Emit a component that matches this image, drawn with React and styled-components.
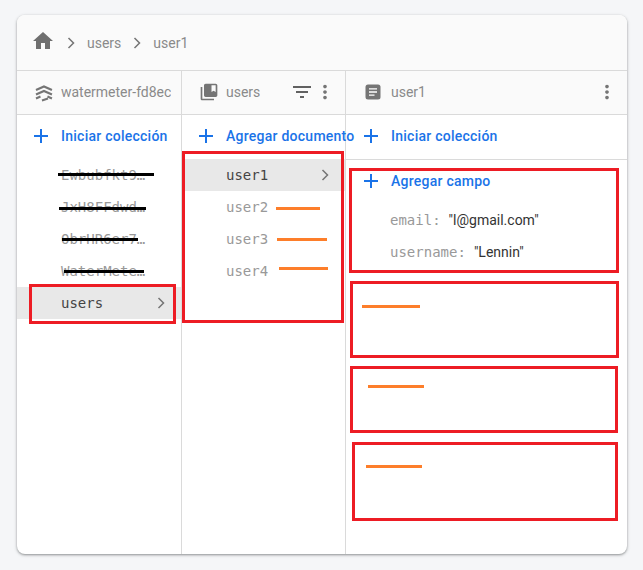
import styled, { createGlobalStyle } from 'styled-components';
import { MdHome, MdCollectionsBookmark, MdFilterList, MdMoreVert } from 'react-icons/md';

const collections = ['Ewbubfkt9…', 'JxH8FFdwd…', 'ObrHR6er7…', 'WaterMete…'];
const documents = ['user2', 'user3', 'user4'];
const fields = [
  { name: 'email', value: '"l@gmail.com"' },
  { name: 'username', value: '"Lennin"' },
];

const redBoxes = [
  { x: 29, y: 284, w: 147, h: 40 },
  { x: 182, y: 151, w: 162, h: 172 },
  { x: 349, y: 168, w: 270, h: 105 },
  { x: 350, y: 281, w: 269, h: 77 },
  { x: 350, y: 366, w: 268, h: 67 },
  { x: 352, y: 442, w: 266, h: 79 },
];

const blackLines = [
  { x: 58, y: 173, w: 96 },
  { x: 59, y: 207, w: 87 },
  { x: 62, y: 238, w: 76 },
  { x: 64, y: 270, w: 80 },
];

const orangeLines = [
  { x: 276, y: 207, w: 44 },
  { x: 277, y: 238, w: 50 },
  { x: 279, y: 267, w: 49 },
  { x: 362, y: 305, w: 58 },
  { x: 368, y: 385, w: 56 },
  { x: 366, y: 465, w: 56 },
];

const Chevron = () => (
  <svg width="12" height="12" viewBox="0 0 12 12" fill="none" stroke="#757575" strokeWidth="1.5">
    <path d="M3.5 1 L8.5 6 L3.5 11" />
  </svg>
);

const Plus = () => (
  <PlusSvg viewBox="0 0 16 16" stroke="#1a73e8" strokeWidth="2">
    <path d="M8 1 V15 M1 8 H15" />
  </PlusSvg>
);

const ProjectIcon = () => (
  <svg width="20" height="20" viewBox="0 0 20 20" fill="none" stroke="#757575" strokeWidth="2.2">
    <path d="M2 8 L10 4.5 L18 8" />
    <path d="M2 12.5 L10 9 L18 12.5" />
    <path d="M2 16.5 L6.5 14.5 M13.5 14.5 L18 16.5" />
    <path d="M8 18.5 L14 16.5" />
  </svg>
);

const DocIcon = () => (
  <svg width="16" height="16" viewBox="0 0 16 16">
    <rect x="0.5" y="0.5" width="15" height="15" rx="2.5" fill="#757575" />
    <path d="M4 4.8 H12 M4 8 H12 M4 11.2 H9.5" stroke="#fff" strokeWidth="1.3" />
  </svg>
);

const App = () => {
  return (
    <Page>
      <GlobalStyle />
      <Card>
        <Breadcrumb>
          <HomeIcon />
          <Crumb>
            <Chevron />
            <CrumbText>users</CrumbText>
          </Crumb>
          <Crumb>
            <Chevron />
            <CrumbText>user1</CrumbText>
          </Crumb>
        </Breadcrumb>
        <Columns>
          <Column $width={165}>
            <ColumnHeader>
              <ProjectIcon />
              <ColumnTitle>watermeter-fd8ec</ColumnTitle>
            </ColumnHeader>
            <ActionRow>
              <Plus />
              <ActionLabel>Iniciar colección</ActionLabel>
            </ActionRow>
            {collections.map(name => (
              <ListItem key={name}>{name}</ListItem>
            ))}
            <ListItem $selected>
              users
              <Chevron />
            </ListItem>
          </Column>

          <Column $width={164}>
            <ColumnHeader>
              <MdCollectionsBookmark size={20} color="#757575" />
              <ColumnTitle>users</ColumnTitle>
              <HeaderTools>
                <MdFilterList size={24} color="#616161" />
                <MdMoreVert size={22} color="#757575" />
              </HeaderTools>
            </ColumnHeader>
            <ActionRow>
              <Plus />
              <ActionLabel>Agregar documento</ActionLabel>
            </ActionRow>
            <ListItem $selected>
              user1
              <Chevron />
            </ListItem>
            {documents.map(name => (
              <ListItem key={name}>{name}</ListItem>
            ))}
          </Column>

          <Column $last>
            <ColumnHeader $inset={19}>
              <DocIcon />
              <ColumnTitle $gap={10}>user1</ColumnTitle>
              <HeaderTools>
                <MdMoreVert size={22} color="#757575" />
              </HeaderTools>
            </ColumnHeader>
            <DividedAction $inset={17}>
              <Plus />
              <ActionLabel>Iniciar colección</ActionLabel>
            </DividedAction>
            <FieldAction $inset={17}>
              <Plus />
              <ActionLabel>Agregar campo</ActionLabel>
            </FieldAction>
            {fields.map(field => (
              <FieldRow key={field.name}>
                <FieldName>{field.name}:</FieldName>
                <FieldValue>{field.value}</FieldValue>
              </FieldRow>
            ))}
          </Column>
        </Columns>
      </Card>

      {redBoxes.map(box => (
        <RedBox key={box.y} $x={box.x} $y={box.y} $w={box.w} $h={box.h} />
      ))}
      {blackLines.map(line => (
        <Scribble key={line.y} $x={line.x} $y={line.y} $w={line.w} $color="#000" />
      ))}
      {orangeLines.map(line => (
        <Scribble key={line.y} $x={line.x} $y={line.y} $w={line.w} $color="#fd7e2a" />
      ))}
    </Page>
  );
};

const GlobalStyle = createGlobalStyle`
  html, body {
    margin: 0;
    padding: 0;
    background: #f5f6f8;
    font-family: Roboto, "Liberation Sans", sans-serif;
  }
`;

const Page = styled.div`
  position: relative;
  box-sizing: border-box;
  width: 643px;
  height: 570px;
  padding: 15px 16px 16px 17px;
  overflow: hidden;
`;

const Card = styled.div`
  display: flex;
  flex-direction: column;
  box-sizing: border-box;
  height: 539px;
  border-radius: 8px;
  background: #fff;
  box-shadow: 0 1px 2px rgba(60, 64, 67, 0.4), 0 1px 3px 1px rgba(60, 64, 67, 0.15);
`;

const Breadcrumb = styled.div`
  display: flex;
  flex: none;
  align-items: center;
  box-sizing: border-box;
  height: 56px;
  padding: 0 14px;
  border-bottom: 1px solid #dadada;
  border-radius: 8px 8px 0 0;
  background: #fafafa;
`;

const HomeIcon = styled(MdHome)`
  width: 24px;
  height: 24px;
  margin-top: -3px;
  margin-right: 10px;
  color: #6f6f6f;
`;

const Crumb = styled.div`
  display: flex;
  align-items: center;
  margin-right: 10px;
`;

const CrumbText = styled.span`
  margin-left: 10px;
  color: #8a8a8a;
  font-size: 14px;
`;

const Columns = styled.div`
  display: flex;
  flex: 1;
  min-height: 0;
`;

const Column = styled.div`
  flex: ${({ $last }) => ($last ? '1' : 'none')};
  box-sizing: border-box;
  width: ${({ $width }) => ($width ? `${$width}px` : 'auto')};
  min-width: 0;
  border-right: ${({ $last }) => ($last ? 'none' : '1px solid #dadada')};
`;

const ColumnHeader = styled.div`
  display: flex;
  align-items: center;
  box-sizing: border-box;
  height: 44px;
  padding: 0 10px 2px ${({ $inset }) => $inset ?? 17}px;
  border-bottom: 1px solid #dadada;
  background: #fafafa;
`;

const ColumnTitle = styled.span`
  margin-left: ${({ $gap }) => $gap ?? 7}px;
  overflow: hidden;
  color: #8a8a8a;
  font-size: 14px;
  white-space: nowrap;
`;

const HeaderTools = styled.div`
  display: flex;
  align-items: center;
  margin-left: auto;
  margin-right: -1px;
`;

const ActionRow = styled.div`
  display: flex;
  align-items: center;
  box-sizing: border-box;
  height: 44px;
  padding-left: ${({ $inset }) => $inset ?? 16}px;
  padding-bottom: 2px;
  white-space: nowrap;
`;

const DividedAction = styled(ActionRow)`
  height: 45px;
  border-bottom: 1px solid #dadada;
`;

const FieldAction = styled(ActionRow)`
  height: 43px;
  padding-bottom: 1px;
`;

const PlusSvg = styled.svg`
  flex: none;
  width: 16px;
  height: 16px;
`;

const ActionLabel = styled.span`
  margin-left: 12px;
  color: #1a73e8;
  font-size: 14px;
  font-weight: 500;
  letter-spacing: 0.25px;
`;

const ListItem = styled.div`
  display: flex;
  align-items: center;
  justify-content: space-between;
  box-sizing: border-box;
  height: 32px;
  padding: 0 14px 0 44px;
  background: ${({ $selected }) => ($selected ? '#e8e8e8' : 'transparent')};
  color: ${({ $selected }) => ($selected ? '#444' : '#999')};
  font-family: "DejaVu Sans Mono", monospace;
  font-size: 14px;
`;

const FieldRow = styled.div`
  display: flex;
  align-items: center;
  box-sizing: border-box;
  height: 32px;
  padding: 2px 0 0 44px;
  white-space: nowrap;
`;

const FieldName = styled.span`
  color: #999;
  font-family: "DejaVu Sans Mono", monospace;
  font-size: 14px;
`;

const FieldValue = styled.span`
  margin-left: 8px;
  color: #333;
  font-size: 14px;
`;

const RedBox = styled.div`
  position: absolute;
  left: ${({ $x }) => $x}px;
  top: ${({ $y }) => $y}px;
  box-sizing: border-box;
  width: ${({ $w }) => $w}px;
  height: ${({ $h }) => $h}px;
  border: 3px solid #ed1c24;
`;

const Scribble = styled.div`
  position: absolute;
  left: ${({ $x }) => $x}px;
  top: ${({ $y }) => $y}px;
  width: ${({ $w }) => $w}px;
  height: 3px;
  background: ${({ $color }) => $color};
`;

export default App;
